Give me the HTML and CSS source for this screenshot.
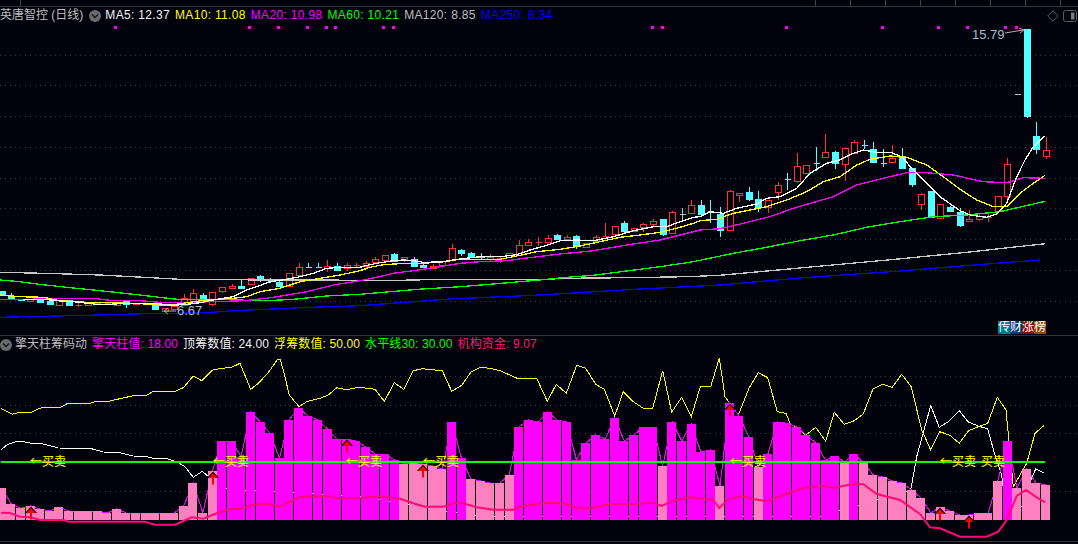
FILE: index.html
```html
<!DOCTYPE html>
<html lang="zh-CN">
<head>
<meta charset="utf-8">
<title>英唐智控 (日线)</title>
<link rel="stylesheet" href="styles.css">
</head>
<body>
<div class="strip">
  <div class="cell lead"><span>1</span></div>
  <div class="cell wide"><span>10.01 10.01 10.01 10.01</span></div>
  <div class="cell mid"><span>10.01 10.01 10.01</span></div>
  <div class="cell hot"><span>10.01</span></div>
  <div class="cell rest"><span>10.01 10.01 10.01 10.01</span></div>
  <div class="cell col"><span>10.01</span></div>
  <div class="cell col"><span>10.01</span></div>
  <div class="cell col"><span>10.01</span></div>
  <div class="cell col"><span>10.01</span></div>
  <div class="cell col"><span>10.01</span></div>
  <div class="cell col"><span></span></div>
  <div class="cell col"><span>10.01</span></div>
  <div class="cell last"><span>1</span></div>
</div>

<section class="pane">
  <header class="legend quote">
    <span class="name">英唐智控 (日线)</span>
    <svg class="chev" viewBox="0 0 12 12"><circle class="chev-bg" cx="6" cy="6" r="6"/><path class="chev-mark" d="M3 4.6 6 7.6 9 4.6"/></svg>
    <span class="c-white">MA5: 12.37</span>
    <span class="c-yellow">MA10: 11.08</span>
    <span class="c-magenta">MA20: 10.98</span>
    <span class="c-green">MA60: 10.21</span>
    <span class="c-gray">MA120: 8.85</span>
    <span class="c-blue">MA250: 8.34</span>
    <span class="tools">
      <svg class="tool-diamond" viewBox="0 0 12 12"><path class="tool-line" d="M6 .8 11.2 6 6 11.2 .8 6Z"/></svg>
      <svg class="tool-panel" viewBox="0 0 14 12"><rect class="tool-line" x=".5" y=".5" width="13" height="11" rx="2"/><rect class="tool-fill" x="8" y="2.5" width="3.5" height="7"/></svg>
    </span>
  </header>
  <svg id="price" class="chart price" viewBox="0 24 1078 311"></svg>
  <div class="badges"><span class="b-teal">传</span><span class="b-navy">财</span><span class="b-red">涨</span><span class="b-brown">榜</span></div>
</section>

<section class="pane sub">
  <header class="legend values">
    <svg class="chev first" viewBox="0 0 12 12"><circle class="chev-bg" cx="6" cy="6" r="6"/><path class="chev-mark" d="M3 4.6 6 7.6 9 4.6"/></svg>
    <span class="name">擎天柱筹码动</span>
    <span class="c-magenta">擎天柱值: 18.00</span>
    <span class="c-white">顶筹数值: 24.00</span>
    <span class="c-yellow">浮筹数值: 50.00</span>
    <span class="c-green">水平线30: 30.00</span>
    <span class="c-rose">机构资金: 9.07</span>
  </header>
  <svg id="volume" class="chart lower" viewBox="0 353 1078 188"></svg>
</section>
<script src="chart.js"></script>
</body>
</html>
```

FILE: styles.css
```css
* { box-sizing: border-box; }
html, body { margin: 0; height: 100%; }
body {
  width: 1078px;
  height: 544px;
  overflow: hidden;
  background: #02020c;
  color: #c8c8c8;
  font: 12px/17px "Liberation Sans", "Noto Sans CJK SC", sans-serif;
}
.strip {
  display: flex;
  height: 7px;
  overflow: hidden;
  border-bottom: 1px solid #333338;
  color: #b9b9b9;
}
.cell { height: 6px; overflow: hidden; white-space: nowrap; }
.cell span { display: block; margin-top: -13px; padding-left: 4px; }
.lead { width: 21px; border-right: 1px solid #444; }
.wide { width: 162px; padding-left: 2px; }
.mid { width: 100px; }
.hot { width: 50px; color: #d8c800; }
.rest { width: 482px; }
.col { width: 35px; border-left: 1px solid #444; text-align: center; }
.last { flex: 1; border-left: 1px solid #444; }
.pane { position: relative; border-bottom: 1px solid #333338; }
.legend {
  display: flex;
  align-items: center;
  gap: 5px;
  height: 17px;
  white-space: nowrap;
}
.quote [class^="c-"] { letter-spacing: .33px; }
.values [class^="c-"] { letter-spacing: .12px; }
.name { color: #bdbdbd; }
.chev { width: 12px; height: 12px; margin: 0 -1px 0 1px; flex: none; }
.chev.first { margin: 0 -2px 0 0; }
.chev-bg { fill: #6a6a6a; }
.chev-mark { fill: none; stroke: #16161c; stroke-width: 1.4; }
.c-white { color: #f4f4f4; }
.c-yellow { color: #ffff00; }
.c-magenta { color: #ff00ff; }
.c-green { color: #00ff00; }
.c-gray { color: #bfbfbf; }
.c-blue { color: #0000ff; }
.c-rose { color: #ff1a70; }
.tools { display: flex; align-items: center; gap: 4px; margin-left: auto; padding-right: 1px; }
.tool-diamond { width: 12px; height: 12px; }
.tool-panel { width: 14px; height: 12px; }
.tool-line { fill: none; stroke: #5c5c5c; }
.tool-fill { fill: #7a7a7a; }
.chart { display: block; width: 1078px; }
.price { height: 311px; }
.lower { height: 188px; }
.badges {
  position: absolute;
  right: 32px;
  bottom: 1px;
  display: flex;
  color: #fff;
  line-height: 13px;
}
.badges span { width: 12px; height: 13px; text-align: center; overflow: hidden; }
.b-teal { background: #007c8a; }
.b-navy { background: #0c3a6e; }
.b-red { background: #8a0808; }
.b-brown { background: #8a4a0a; }

.grid { stroke: #3a3a3a; stroke-width: 1; stroke-dasharray: 1 4; shape-rendering: crispEdges; }
.dot { fill: #ff00ff; shape-rendering: crispEdges; }
.c-body { fill: #54ffff; stroke: #54ffff; shape-rendering: crispEdges; }
.c-wick { stroke: #54ffff; stroke-width: 1; shape-rendering: crispEdges; }
.r-body { fill: #02020c; stroke: #ff3232; stroke-width: 1; shape-rendering: crispEdges; }
.r-wick { stroke: #ff3232; stroke-width: 1; shape-rendering: crispEdges; }
.g-wick { stroke: #bcbcbc; stroke-width: 1; shape-rendering: crispEdges; }
.g-body { fill: #bcbcbc; stroke: #bcbcbc; shape-rendering: crispEdges; }
.ln { fill: none; shape-rendering: crispEdges; }
.ma5 { stroke: #ffffff; stroke-width: 1.3; }
.ma10 { stroke: #ffff00; stroke-width: 1.3; }
.ma20 { stroke: #ff00ff; stroke-width: 1.3; }
.ma60 { stroke: #00ff00; stroke-width: 1.3; }
.ma120 { stroke: #c8c8c8; stroke-width: 1.3; }
.ma250 { stroke: #0000ff; stroke-width: 1.3; }
.peak-text { fill: #a9bccf; font-size: 13px; }
.peak-line { fill: none; stroke: #b0b0b0; stroke-width: 1; }
.bar-m { fill: #ff00ff; shape-rendering: crispEdges; }
.bar-p { fill: #ff80c0; shape-rendering: crispEdges; }
.top-line { stroke: #ff00ff; stroke-width: 1; }
.low-white { stroke: #ffffff; stroke-width: 1; }
.low-yellow { stroke: #ffff00; stroke-width: 1; }
.level { stroke: #00ff00; stroke-width: 2; }
.rose { stroke: #ff0a78; stroke-width: 2; shape-rendering: geometricPrecision; }
.arr-shade { fill: #000; }
.arr { fill: #ff0000; }
.sig { fill: #ffff00; stroke: #ffff00; stroke-width: .1; font-size: 12px; font-family: "Noto Sans CJK SC", sans-serif; }
```

FILE: chart.js
```js
(function () {
  var NS = 'http://www.w3.org/2000/svg';
  var S = 9.578, X0 = 1.7;
  function cx(k) { return X0 + k * S; }
  function el(parent, name, attrs, text) {
    var e = document.createElementNS(NS, name);
    for (var a in attrs) e.setAttribute(a, attrs[a]);
    if (text) e.textContent = text;
    parent.appendChild(e);
    return e;
  }
  // reading frames: coordinates are taken from 3x crops of each chart region
  var z3 = function (p) { return [p[0] / 3, 240 + p[1] / 3]; };
  var z7 = function (p) { return [360 + p[0] / 3, 170 + p[1] / 3]; };
  var z2 = function (p) { return [700 + p[0] / 3, p[1] / 3]; };
  var l4 = function (p) { return [p[0] / 3, 360 + p[1] / 3]; };
  var l5 = function (p) { return [360 + p[0] / 3, 360 + p[1] / 3]; };
  var l6 = function (p) { return [720 + p[0] / 3, 360 + p[1] / 3]; };
  var raw = function (p) { return p; };

  function join() {
    var out = [], last = -1;
    for (var i = 0; i < arguments.length; i += 2) {
      var f = arguments[i], pts = arguments[i + 1];
      pts.forEach(function (p) {
        var q = f(p);
        if (q[0] > last + 0.01) { out.push(q); last = q[0]; }
      });
    }
    return out;
  }
  function poly(parent, cls, pts) {
    el(parent, 'polyline', { 'class': 'ln ' + cls, points: pts.map(function (p) { return p[0].toFixed(1) + ',' + p[1].toFixed(1); }).join(' ') });
  }

  var price = document.getElementById('price');
  [55, 85, 116, 147, 178, 208, 239, 270, 301].forEach(function (y) {
    el(price, 'line', { 'class': 'grid', x1: 0, x2: 1078, y1: y + .5, y2: y + .5 });
  });
  [115.4, 249, 278, 306.5, 326.4, 335.4, 383, 393, 651.7, 661.7, 785.7, 881.7, 938.3, 967.3, 1005.3, 1015.7].forEach(function (x) {
    el(price, 'rect', { 'class': 'dot', x: Math.round(x) - 1, y: 26, width: 3, height: 3 });
  });

  // top, bottom, wick top, wick bottom, colour
  var c3 = [[153,162,153,162,'c'],[167,174,160,177,'c'],[178,182,178,182,'c'],[178,185,178,185,'r'],[178,186,178,190,'c'],[184,192,184,192,'c'],[179,193,179,193,'r'],[179,193,179,193,'c'],[194,194,190,200,'r'],[190,195,190,195,'r'],[190,190,190,190,'r'],[190,190,190,190,'r'],[185,193,185,193,'r'],[184,193,184,205,'c'],[190,193,190,193,'r'],[190,190,186,193,'r'],[195,207,195,210,'c'],[205,215,205,215,'r'],[199,207,199,207,'r'],[173,195,163,195,'r'],[160,183,148,183,'r'],[166,185,160,185,'c'],[157,193,157,197,'r'],[142,155,142,160,'r'],[138,143,132,143,'r'],[138,143,118,143,'c'],[115,132,115,135,'r'],[108,118,105,125,'c'],[122,122,113,128,'c'],[125,137,120,138,'c'],[100,138,100,140,'r'],[82,105,68,105,'r'],[82,82,70,85,'c'],[82,82,70,85,'c'],[78,84,60,95,'r'],[77,88,70,90,'c'],[75,85,70,92,'r'],[76,76,70,80,'r']];
  var c7 = [[280,290,273,295,'r'],[268,278,262,283,'r'],[256,270,256,270,'r'],[252,272,249,277,'c'],[262,268,262,275,'r'],[268,288,262,290,'c'],[285,290,281,294,'c'],[287,293,281,295,'r'],[274,287,274,287,'r'],[235,272,222,272,'r'],[240,249,237,257,'c'],[249,262,245,264,'c'],[260,260,250,268,'c'],[262,268,252,275,'r'],[265,272,257,279,'r'],[250,262,250,262,'r'],[226,255,210,255,'r'],[217,227,207,227,'r'],[217,217,201,228,'r'],[203,215,195,216,'r'],[195,207,192,209,'c'],[202,207,195,207,'r'],[198,228,195,236,'c'],[218,230,218,230,'r'],[202,213,195,213,'r'],[198,198,160,200,'r'],[169,194,169,200,'r'],[160,183,153,188,'c'],[175,185,175,185,'r'],[163,171,158,185,'r'],[154,164,148,167,'r'],[148,194,148,197,'c'],[127,191,124,191,'r'],[132,132,113,152,'g'],[105,128,90,130,'r']];
  var c2 = [[615,642,600,645,'c'],[634,634,600,668,'c'],[643,692,621,710,'c'],[574,692,570,694,'r'],[580,586,580,605,'r'],[576,596,561,603,'c'],[597,620,573,635,'c'],[601,623,601,638,'r'],[556,577,546,600,'r'],[538,538,519,570,'c'],[498,542,460,548,'r'],[496,520,496,520,'r'],[490,490,441,513,'c'],[457,473,402,473,'r'],[456,488,453,507,'c'],[445,494,445,543,'r'],[427,460,420,460,'r'],[436,436,420,446,'c'],[447,486,426,488,'c'],[488,488,447,500,'c'],[475,488,435,488,'r'],[468,504,444,507,'c'],[504,552,504,560,'c'],[583,613,578,630,'r'],[573,652,573,652,'c'],[613,655,613,658,'r'],[621,633,618,636,'c'],[636,674,625,680,'c'],[658,664,630,664,'r'],[648,658,640,662,'r'],[650,650,640,665,'r'],[589,635,589,640,'r'],[493,590,475,596,'r'],[283,283,283,283,'g'],[87,347,87,353,'c'],[408,446,366,461,'c'],[451,470,411,476,'r']];
  function candle(k, d, oy) {
    var x = Math.round(cx(k)) + .5, t = d[0] / 3 + oy, b = d[1] / 3 + oy, wt = d[2] / 3 + oy, wb = d[3] / 3 + oy, col = d[4];
    if (wb - wt > b - t) el(price, 'line', { 'class': col + '-wick', x1: x, x2: x, y1: wt, y2: wb });
    if (b - t < 1) {
      el(price, 'line', { 'class': col + '-wick', x1: x - 3, x2: x + 3, y1: Math.round(t) + .5, y2: Math.round(t) + .5 });
    } else {
      el(price, 'rect', { 'class': col + '-body', x: x - 3, y: Math.round(t) + .5, width: 6, height: Math.max(1, Math.round(b - t)) });
    }
  }
  c3.forEach(function (d, i) { candle(i, d, 240); });
  c7.forEach(function (d, i) { candle(38 + i, d, 170); });
  c2.forEach(function (d, i) { candle(73 + i, d, 0); });

  poly(price, 'ma250', join(z3, [[0,232],[170,228],[300,225],[400,222],[620,218],[700,212],[800,208],[900,203],[1080,197]], raw, [[450,299],[540,295],[640,289],[720,285],[800,278],[900,271],[1000,263],[1040,260]]));
  poly(price, 'ma120', join(z3, [[0,97],[130,100],[300,105],[430,112],[540,118],[800,120],[1000,120],[1080,122]], z7, [[60,332],[260,328],[560,328],[620,325],[800,323],[980,320],[1080,316]], z2, [[585,778],[800,757],[1035,731]]));
  poly(price, 'ma60', join(z3, [[0,120],[60,125],[110,132],[200,142],[300,152],[420,165],[530,178],[620,178],[800,182],[880,178],[980,168],[1080,163]], z7, [[175,358],[300,350],[400,342],[540,330],[620,322],[700,316],[800,303],[900,290],[1000,275]], z2, [[100,760],[200,742],[300,722],[400,705],[500,682],[600,665],[700,650],[800,645],[900,635],[1035,604]]));
  poly(price, 'ma20', join(z3, [[0,178],[90,178],[160,175],[280,175],[340,182],[420,182],[480,187],[560,187],[640,185],[730,182],[800,175],[860,165],[920,155],[1000,135],[1080,122]], z7, [[50,322],[100,310],[160,302],[230,292],[300,280],[360,275],[440,272],[500,264],[600,252],[700,242],[800,225],[900,210],[1000,185]], z2, [[0,690],[60,686],[130,670],[210,650],[280,625],[400,590],[470,555],[550,535],[620,518],[680,518],[760,525],[850,545],[920,548],[970,533],[1035,535]]));
  poly(price, 'ma10', join(z3, [[0,165],[60,170],[130,172],[180,182],[260,187],[340,188],[440,192],[500,197],[560,188],[620,180],[700,175],[740,170],[780,155],[840,145],[900,125],[960,115],[1020,105],[1080,92]], z7, [[30,292],[70,284],[120,281],[180,280],[240,277],[300,268],[360,268],[420,268],[470,258],[530,245],[600,238],[660,228],[720,215],[780,202],[840,195],[900,187],[950,175],[1000,160]], z2, [[0,662],[50,658],[100,640],[200,620],[260,600],[320,575],[370,545],[420,530],[470,495],[510,478],[570,468],[620,472],[680,495],[730,530],[780,568],[830,600],[880,620],[920,620],[960,580],[1000,550],[1035,526]]));
  poly(price, 'ma5', join(z3, [[70,178],[130,178],[180,183],[220,185],[290,193],[330,193],[380,190],[460,190],[520,196],[570,192],[600,188],[640,180],[700,170],[740,150],[770,140],[810,125],[860,118],[900,110],[940,100],[980,85],[1020,82],[1080,82]], z7, [[16,287],[60,278],[100,272],[130,270],[160,272],[190,277],[240,276],[300,267],[360,260],[420,260],[470,254],[510,240],[560,226],[600,212],[650,210],[700,212],[760,200],[820,182],[880,170],[920,170],[960,155],[1000,142]], z2, [[0,650],[30,635],[70,640],[110,625],[170,612],[200,595],[240,590],[290,565],[330,520],[380,490],[420,480],[460,460],[490,450],[530,457],[575,458],[605,470],[640,510],[680,550],[720,590],[780,632],[810,645],[860,652],[890,642],[920,610],[950,530],[975,480],[1000,440],[1035,408]]));

  el(price, 'text', { 'class': 'peak-text', x: 972, y: 39 }, '15.79');
  el(price, 'path', { 'class': 'peak-line', d: 'M1005 33 1023 30M1019 28 1024 30 1020 33' });
  el(price, 'text', { 'class': 'peak-text', x: 177, y: 315 }, '6.67');
  el(price, 'path', { 'class': 'peak-line', d: 'M176 311H165M168 308 164 311 168 314' });

  var low = document.getElementById('volume');
  [376, 405, 433, 491].forEach(function (y) {
    el(low, 'line', { 'class': 'grid', x1: 0, x2: 1078, y1: y + .5, y2: y + .5 });
  });

  poly(low, 'low-white', join(l4, [[3,270],[20,255],[50,244],[70,245],[95,250],[125,251],[150,257],[175,264],[270,265],[310,276],[355,277],[400,288],[440,290],[458,295],[500,296],[530,305],[555,320],[580,352],[607,334],[637,360],[680,387],[1080,410]], l5, [[0,412],[360,470],[1080,470]], l6, [[300,470],[572,390],[590,290],[632,137],[658,202],[688,183],[718,152],[745,186],[775,198],[803,207],[822,275],[845,345],[860,470],[905,440],[935,355],[947,327],[973,340]]));
  poly(low, 'low-yellow', join(l4, [[3,145],[37,163],[55,158],[95,157],[115,146],[133,142],[182,142],[203,130],[270,130],[285,125],[325,124],[400,107],[440,106],[460,94],[525,94],[550,83],[580,48],[605,62],[638,30],[665,25],[695,22],[720,10],[752,88],[775,70],[805,38],[833,-3],[840,-3],[850,30],[868,105],[897,140],[920,125],[960,115],[985,105],[1010,83],[1040,89],[1070,83]], l5, [[0,82],[45,88],[73,124],[103,68],[131,88],[160,32],[187,26],[247,32],[275,94],[305,76],[333,36],[360,22],[390,25],[420,32],[472,55],[530,55],[562,124],[589,73],[619,100],[650,16],[677,25],[707,73],[733,88],[764,168],[790,95],[820,125],[850,145],[878,145],[908,32],[935,157],[965,112],[994,170],[1021,80],[1052,80],[1078,-6]], l6, [[15,110],[55,165],[87,85],[115,38],[143,53],[172,155],[198,160],[210,190],[258,225],[287,202],[317,244],[343,157],[373,193],[403,182],[430,162],[459,87],[487,73],[517,82],[545,43],[574,80],[605,210],[632,270],[659,215],[690,226],[718,250],[746,212],[775,200],[803,190],[832,112],[858,150],[880,380],[920,310],[945,220],[973,196]]));

  var tops = [[384,'p'],[432,'p'],[445,'p'],[438,'p'],[447,'p'],[453,'p'],[441,'p'],[453,'p'],[453,'p'],[453,'p'],[453,'p'],[459,'p'],[447,'p'],[459,'p'],[459,'p'],[459,'p'],[459,'p'],[459,'p'],[459,'p'],[438,'p'],[369,'p'],[459,'p'],[333,'p'],[243,'m'],[243,'m'],[290,'m'],[156,'m'],[186,'m'],[220,'m'],[294,'m'],[180,'m'],[144,'m'],[168,'m'],[180,'m'],[207,'m'],[237,'m'],[237,'m'],[243,'m'],[261,'m'],[282,'m'],[282,'m'],[300,'m'],[312,'p'],[309,'p'],[312,'p'],[318,'p'],[327,'p'],[186,'m'],[294,'m'],[357,'p'],[363,'p'],[369,'p'],[369,'p'],[345,'p'],[201,'m'],[180,'m'],[186,'m'],[156,'m'],[180,'m'],[186,'m'],[300,'m'],[249,'m'],[225,'m'],[237,'m'],[174,'m'],[243,'m'],[225,'m'],[201,'m'],[201,'m'],[318,'p'],[186,'m'],[243,'m'],[192,'m'],[276,'m'],[270,'m'],[378,'p'],[130,'m'],[168,'m'],[231,'m'],[320,'p'],[282,'m'],[186,'m'],[190,'m'],[200,'m'],[225,'m'],[249,'m'],[300,'m'],[288,'m'],[306,'p'],[282,'m'],[309,'p'],[345,'p'],[351,'p'],[363,'p'],[369,'p'],[390,'p'],[414,'p'],[459,'p'],[441,'p'],[453,'p'],[465,'p'],[465,'p'],[459,'p'],[459,'p'],[363,'p'],[243,'m'],[384,'p'],[327,'p'],[369,'p'],[375,'p']];
  poly(low, 'top-line', tops.map(function (t, k) { return [cx(k), 360 + t[0] / 3]; }));
  tops.forEach(function (t, k) {
    var left = Math.floor(cx(k) - 4.3), y = Math.round(360 + t[0] / 3);
    el(low, 'rect', { 'class': 'bar-' + t[1], x: left, y: y, width: 9, height: 520 - y });
  });

  el(low, 'line', { 'class': 'ln level', x1: 1, x2: 1045, y1: 462, y2: 462 });
  poly(low, 'rose', join(l4, [[3,458],[30,459],[60,470],[90,472],[120,480],[190,480],[205,485],[435,485],[465,494],[525,494],[550,483],[575,472],[610,476],[650,460],[680,450],[725,445],[760,434],[800,431],[840,440],[880,420],[900,412],[940,409],[990,409],[1005,413],[1080,414]], l5, [[60,409],[120,416],[160,430],[195,440],[250,440],[285,428],[310,430],[350,442],[400,449],[460,449],[490,438],[540,431],[580,428],[620,433],[650,443],[700,443],[750,432],[830,431],[880,428],[905,438],[940,422],[990,412],[1060,420],[1078,444]], l6, [[25,418],[65,408],[100,417],[140,424],[200,402],[250,384],[310,377],[340,384],[400,372],[430,373],[470,402],[540,420],[600,462],[630,502],[660,505],[720,530],[800,530],[835,515],[860,480],[890,408],[918,390],[950,412],[975,427]]));

  [[30,'←买卖'],[213,'←买卖'],[346,'←买卖'],[423,'←买卖'],[730,'←买卖'],[940,'←买卖'],[981,'买卖']].forEach(function (s) {
    el(low, 'text', { 'class': 'sig', x: s[0], y: 466 }, s[1]);
  });

  [[31,508],[213,473],[347,441],[423,466],[730,405],[940,509],[969,517]].forEach(function (a) {
    var x = a[0], y = a[1];
    el(low, 'path', { 'class': 'arr-shade', d: 'M' + x + ' ' + (y - 1.5) + 'l6 6.5h-12z' });
    el(low, 'path', { 'class': 'arr', d: 'M' + x + ' ' + y + 'l4.5 5h-3.5v6.5h-2v-6.5h-3.5z' });
  });
})();
```
